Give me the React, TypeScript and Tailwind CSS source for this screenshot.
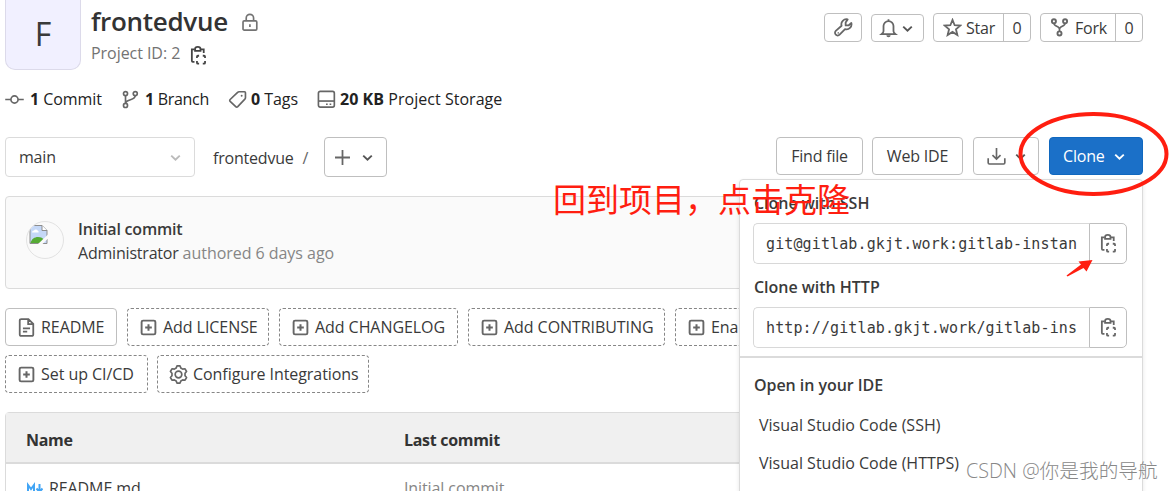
import type { ReactNode } from 'react';

interface IconProps {
  className?: string;
  children?: ReactNode;
}

function Icon({ className = 'size-[19px] text-[#666]', children }: IconProps) {
  return (
    <svg
      viewBox="0 0 16 16"
      className={`shrink-0 ${className}`}
      fill="none"
      stroke="currentColor"
      strokeWidth={1.4}
      aria-hidden="true"
    >
      {children}
    </svg>
  );
}

const LockIcon = () => (
  <Icon className="mt-[2px] size-[19px] text-[#737373]">
    <rect x="1.7" y="6.6" width="11.6" height="7.8" rx="1" />
    <path d="M4.4 6.6V4.2a3.1 3.1 0 0 1 6.2 0v2.4M7.5 9.5v2.2" />
  </Icon>
);

const CopyIcon = ({ className }: IconProps) => (
  <Icon className={className}>
    <path d="M4.8 2.9H2.4v9.6c0 .5.3.8.8.8h1.4M10 2.9h2.4v3" strokeWidth={1.5} />
    <path d="M5.1 4.1V2.7a2.3 1.9 0 0 1 4.6 0v1.4z" strokeWidth={1.5} />
    <path
      d="M6.7 10V9c0-.5.3-.8.8-.8h1M11.6 8.200h1.100c.5 0 .8.300.8.800v1M13.500 12.700v1.300c0 .5-.3.8-.8.8h-1.100M8.500 14.800h-1c-.5 0-.8-.3-.8-.8v-1.300"
      strokeWidth={1.5}
    />
  </Icon>
);

const CommitIcon = () => (
  <Icon>
    <circle cx="8" cy="8" r="3" />
    <path d="M.2 8H5M11 8h4.8" />
  </Icon>
);

const BranchIcon = () => (
  <Icon>
    <circle cx="3.8" cy="3" r="1.7" />
    <circle cx="12" cy="3" r="1.7" />
    <circle cx="3.8" cy="13" r="1.7" />
    <path d="M3.8 4.7v6.6M12 4.7c0 4.5-7 2.5-8.2 6.3" />
  </Icon>
);

const TagIcon = () => (
  <Icon>
    <path d="M9.3 1.5h4.6c.5 0 .8.3.8.8v4.2c0 .5-.2.9-.5 1.2l-6 6.3a1.2 1.2 0 0 1-1.7 0L1.8 9.6a1.1 1.1 0 0 1 0-1.6l6.3-6c.3-.3.7-.5 1.2-.5z" />
    <circle cx="11.5" cy="4.8" r=".8" fill="currentColor" stroke="none" />
  </Icon>
);

const DiskIcon = () => (
  <Icon>
    <rect x="1.2" y="1.2" width="13.4" height="13.2" rx="1.5" />
    <path d="M1.2 9.3h13.4" />
    <path d="M7.6 12H9M10.6 12H12" />
  </Icon>
);

const ChevronIcon = ({ className = 'size-[19px] text-[#555]' }: IconProps) => (
  <Icon className={className}>
    <path d="m4.4 6.4 3.6 3.4 3.6-3.4" strokeWidth={1.6} />
  </Icon>
);

const PlusIcon = () => (
  <Icon>
    <path d="M8 1.7v12.6M1.7 8h12.6" strokeWidth={1.5} />
  </Icon>
);

const WrenchIcon = () => (
  <Icon>
    <path
      d="M11.5 1.2A4.200 4.200 0 0 0 6.400 6.500L1.500 10.900a2.200 2.200 0 0 0 3.200 3.200l4.600-4.800a4.200 4.200 0 0 0 5.300-5.100L12.200 6.300H9.800V3.800z"
      strokeWidth={1.5}
      strokeLinejoin="round"
    />
    <path d="M3.100 12.500h.9" />
  </Icon>
);

const BellIcon = () => (
  <Icon>
    <path
      d="M8 1.8a4.200 4.200 0 0 0-4.200 4.300v4.200c0 1-.7 1.700-1.700 2.500h11.800c-1-.8-1.700-1.500-1.700-2.500V6.100A4.200 4.200 0 0 0 8 1.800zM8 .2v1.600"
      strokeWidth={1.5}
    />
    <path d="M6.200 13.600a1.800 1.800 0 0 0 3.600 0z" fill="currentColor" stroke="none" />
  </Icon>
);

const StarIcon = () => (
  <Icon>
    <path d="m8 1.6 1.8 4.5 4.8.3-3.7 3.1 1.2 4.8L8 11.7l-4.1 2.6 1.2-4.8-3.7-3.1 4.8-.3z" strokeWidth={1.5} />
  </Icon>
);

const ForkIcon = () => (
  <Icon>
    <circle cx="3.3" cy="2.8" r="1.7" strokeWidth={1.6} />
    <circle cx="12.7" cy="2.8" r="1.7" strokeWidth={1.6} />
    <circle cx="8" cy="13" r="1.7" strokeWidth={1.6} />
    <path d="M3.3 4.5C3.3 7.5 8 6.5 8 9.5v1.7M12.7 4.5C12.7 7.5 8 6.5 8 9.5" />
  </Icon>
);

const DownloadIcon = () => (
  <Icon>
    <path d="M8 .8V10M4.6 6.8 8 10.2l3.4-3.4M1 9.5v3.8c0 .6.4 1 1 1h12c.6 0 1-.4 1-1V9.5" />
  </Icon>
);

const DocIcon = () => (
  <Icon>
    <path
      d="M9.6.9H3.7c-.9 0-1.4.5-1.4 1.3v11.6c0 .8.5 1.3 1.4 1.3h8.600c.9 0 1.400-.5 1.400-1.300V5zM9.400 1v4.200h4.200M5 8.700h6M5 11.500h3.600"
      strokeWidth={1.5}
    />
  </Icon>
);

const PlusSquareIcon = () => (
  <Icon>
    <rect x="2.2" y="2.2" width="11.6" height="11.6" rx="1.2" strokeWidth={1.6} />
    <path d="M8 5.2v5.6M5.2 8h5.6" strokeWidth={1.7} />
  </Icon>
);

const GearIcon = () => (
  <Icon>
    <path
      d="M6.7.8h2.6l.7 1.8 1.5.9 2-.3 1.3 2.3L13.5 7v2l1.3 1.5-1.3 2.3-2-.3-1.500.9-.7 1.800H6.700L6 13.400l-1.500-.9-2 .3-1.300-2.300L2.500 9V7L1.200 5.500l1.300-2.300 2 .3L6 2.600z"
      strokeLinejoin="round"
    />
    <circle cx="8" cy="8" r="2.8" />
  </Icon>
);

const BrokenImage = () => (
  <svg viewBox="0 0 19 19" className="mt-[3px] ml-[2px] size-[19px]" aria-hidden="true">
    <path d="M1 .5h12l5 5v13H1z" fill="#c5d8f7" stroke="#8d8d8d" />
    <path d="M13 .5v5h5" fill="#fff" stroke="#8d8d8d" />
    <path d="M3 7.5a2 2 0 0 1 2-2 2.3 2.3 0 0 1 4 .5 1 1 0 0 1 .5 1.5z" fill="#fff" />
    <path d="M1.5 18c1-4 4-6 7.5-6 3 0 5 1 6 3l-4 3z" fill="#56ab35" />
    <path d="M9 19l10-9.5v4L13.5 19z" fill="#fafafa" />
  </svg>
);

const base = 'flex items-center rounded-[4px] border bg-white';

function FileButton({ width, label, icon, solid }: { width: string; label: string; icon?: ReactNode; solid?: boolean }) {
  return (
    <button
      className={`${base} ${width} h-[38px] shrink-0 gap-[5px] overflow-hidden pl-[11px] tracking-[-0.06px] whitespace-nowrap ${
        solid ? 'border-[#bfbfbf]' : 'border-dashed border-[#868686]'
      }`}
    >
      {icon ?? <PlusSquareIcon />}
      {label}
    </button>
  );
}

function CloneField({ label, url }: { label: string; url: string }) {
  return (
    <div className="pl-[13px]">
      <div className="pl-px font-semibold tracking-[-0.02px]">{label}</div>
      <div className="mt-2 flex h-[41px] w-[374px]">
        <div className="w-[336px] overflow-hidden rounded-l-[5px] border border-r-0 border-[#d8d8d8] pl-3 font-['DejaVu_Sans_Mono',monospace] text-[15px] leading-[40px] tracking-[0.12px] whitespace-nowrap">
          {url}
        </div>
        <button className="flex w-[38px] items-center justify-center rounded-r-[5px] border border-[#bfbfbf]">
          <CopyIcon />
        </button>
      </div>
    </div>
  );
}

function CloneMenu() {
  return (
    <div className="absolute top-[179px] left-[739px] h-[330px] w-[404px] rounded-[4px] border border-[#dbdbdb] bg-white pt-[11px] shadow-[0_2px_4px_rgba(0,0,0,0.1)]">
      <CloneField label="Clone with SSH" url="git@gitlab.gkjt.work:gitlab-instan" />
      <div className="h-[11px]" />
      <CloneField label="Clone with HTTP" url="http://gitlab.gkjt.work/gitlab-ins" />
      <div className="mt-2 border-t-2 border-[#dbdbdb]" />
      <div className="mt-[15px] pl-[14px] font-semibold tracking-[-0.05px]">Open in your IDE</div>
      <div className="mt-[16px] pl-[19px] tracking-normal">Visual Studio Code (SSH)</div>
      <div className="mt-[14px] pl-[19px] tracking-normal">Visual Studio Code (HTTPS)</div>
    </div>
  );
}

export default function App() {
  return (
    <div className="relative h-[491px] w-[1173px] overflow-hidden bg-white pl-[5px] font-['Open_Sans','Noto_Sans_CJK_SC',sans-serif] text-[16px] leading-6 tracking-[-0.2px] text-[#3a3a3a]">
      <header className="flex h-[70px] w-[1138px]">
        <div className="flex h-[70px] w-[76px] items-center justify-center rounded-b-[10px] border border-t-0 border-[#dcdaea] bg-[#f1f0ff] pb-[2px] text-[32px]">
          F
        </div>
        <div className="ml-[10px] flex-1">
          <div className="flex h-[42px] items-center gap-[13px]">
            <h1 className="text-[26px] font-semibold tracking-[-0.3px] text-[#333]">frontedvue</h1>
            <LockIcon />
          </div>
          <div className="flex h-[21px] items-center gap-[9px] tracking-[-0.05px] text-[#737373]">
            Project ID: 2
            <CopyIcon className="mt-[5px] size-[19px] text-[#444]" />
          </div>
        </div>
        <div className="mt-[13px] flex h-[29px] gap-[9px]">
          <button className={`${base} w-[38px] justify-center border-[#bfbfbf]`}>
            <WrenchIcon />
          </button>
          <button className={`${base} mt-px w-[53px] justify-center border-[#bfbfbf]`}>
            <BellIcon />
            <ChevronIcon />
          </button>
          <div className={`${base} w-[98px] border-[#bfbfbf]`}>
            <button className="flex h-full w-[70px] items-center gap-1 border-r border-[#bfbfbf] pl-[9px]">
              <StarIcon />
              Star
            </button>
            <span className="flex-1 text-center">0</span>
          </div>
          <div className={`${base} w-[103px] border-[#bfbfbf]`}>
            <button className="flex h-full w-[75px] items-center gap-[6px] border-r border-[#bfbfbf] pl-[9px]">
              <ForkIcon />
              Fork
            </button>
            <span className="flex-1 text-center">0</span>
          </div>
        </div>
      </header>

      {/* Repository stats */}
      <div className="mt-[17px] flex h-6 items-center tracking-[-0.05px] text-[#222]">
        <div className="flex w-[116px] items-center gap-[6px]">
          <CommitIcon />
          <span><b>1</b> Commit</span>
        </div>
        <div className="flex w-[107px] items-center gap-[5px] tracking-[-0.3px]">
          <BranchIcon />
          <span><b>1</b> Branch</span>
        </div>
        <div className="flex w-[89px] items-center gap-1">
          <TagIcon />
          <span><b>0</b> Tags</span>
        </div>
        <div className="flex items-center gap-1 tracking-[0.04px]">
          <DiskIcon />
          <span><b>20 KB</b> Project Storage</span>
        </div>
      </div>

      {/* Branch selector and actions */}
      <div className="mt-[26px] flex h-10 w-[1138px] items-start">
        <button className={`${base} h-10 w-[190px] justify-between border-[#dbdbdb] pr-[9px] pl-[13px]`}>
          main
          <ChevronIcon className="size-[19px] text-[#bbb]" />
        </button>
        <span className="mt-[9px] ml-[18px] w-[98px] whitespace-nowrap">
          frontedvue <span className="ml-[5px] text-[#666]">/</span>
        </span>
        <button className={`${base} ml-[13px] h-10 w-[63px] gap-[6px] border-[#bfbfbf] pl-2`}>
          <PlusIcon />
          <ChevronIcon />
        </button>
        <div className="ml-auto flex h-[38px]">
          <button className={`${base} w-[87px] justify-center border-[#bfbfbf]`}>Find file</button>
          <button className={`${base} ml-[9px] w-[91px] justify-center border-[#bfbfbf]`}>Web IDE</button>
          <button className={`${base} ml-[10px] w-[66px] gap-[5px] border-[#bfbfbf] pl-[13px]`}>
            <DownloadIcon />
            <ChevronIcon />
          </button>
          <button className="ml-[10px] flex w-[94px] items-center gap-[5px] rounded-[4px] border border-[#1068bf] bg-[#1b70c8] pl-[13px] text-white">
            Clone
            <ChevronIcon className="size-[19px] text-white" />
          </button>
        </div>
      </div>

      {/* Last commit */}
      <div className="mt-[19px] flex h-[93px] w-[1138px] rounded-[4px] border border-[#dbdbdb] bg-[#fafafa] pt-5 pl-5">
        <div className="mt-1 size-[38px] overflow-hidden rounded-full border border-[#e2e2e2]">
          <BrokenImage />
        </div>
        <div className="ml-[14px]">
          <div className="font-semibold">Initial commit</div>
          <div>
            Administrator <span className="tracking-[-0.04px] text-[#868686]">authored 6 days ago</span>
          </div>
        </div>
      </div>

      <div className="mt-[19px] flex gap-[10px]">
        <FileButton width="w-[112px]" label="README" icon={<DocIcon />} solid />
        <FileButton width="w-[142px]" label="Add LICENSE" />
        <FileButton width="w-[179px]" label="Add CHANGELOG" />
        <FileButton width="w-[197px]" label="Add CONTRIBUTING" />
        <FileButton width="w-[190px]" label="Enable Auto DevOps" />
      </div>
      <div className="mt-[9px] flex gap-[9px]">
        <FileButton width="w-[143px]" label="Set up CI/CD" />
        <FileButton width="w-[212px]" label="Configure Integrations" icon={<GearIcon />} />
      </div>

      {/* File tree */}
      <div className="mt-[19px] h-[100px] w-[1138px] rounded-t-[4px] border border-[#dbdbdb]">
        <div className="flex h-[51px] items-center border-b-2 border-[#dbdbdb] bg-[#f0f0f0] pt-[5px] pl-5 font-bold tracking-[-0.3px] text-[#333]">
          <span className="w-[378px]">Name</span>
          <span>Last commit</span>
        </div>
        <div className="flex pt-[12px] pl-5 tracking-[-0.1px]">
          <span className="flex w-[378px] items-center gap-[6px]">
            <svg viewBox="0 0 17 12" className="h-3 w-[17px]" fill="none" stroke="#42a5f5" strokeWidth="2" aria-hidden="true">
              <path d="M2 11V3l3 4 3-4v8M13.5 2v7M10.5 6.5l3 3.5 3-3.5" />
            </svg>
            README.md
          </span>
          <span className="text-[#868686]">Initial commit</span>
        </div>
      </div>

      <CloneMenu />

      {/* Annotations */}
      <svg
        viewBox="0 0 160 90"
        className="pointer-events-none absolute top-[108px] left-[1013px] h-[90px] w-[160px]"
        fill="none"
        stroke="#ff1e10"
        strokeWidth="4"
        aria-hidden="true"
      >
        <ellipse cx="80.5" cy="46" rx="73" ry="40" />
      </svg>
      <svg
        viewBox="0 0 30 20"
        className="pointer-events-none absolute top-[258px] left-[1065px] h-5 w-[30px]"
        fill="#ff1e10"
        aria-hidden="true"
      >
        <path d="M1.5 17.5 16 6.5 13.5 3.5 27.5 2 21.5 13.5 18.5 10 2.5 18.5z" />
      </svg>
      <div className="pointer-events-none absolute top-[176px] left-[553px] text-[33px] leading-[48px] tracking-normal whitespace-nowrap text-[#ff1e10]">
        回到项目，点击克隆
      </div>
      <div className="pointer-events-none absolute top-[457px] left-[966px] text-[19.7px] leading-7 font-light tracking-normal whitespace-nowrap text-[#888]">
        CSDN @你是我的导航
      </div>
    </div>
  );
}
